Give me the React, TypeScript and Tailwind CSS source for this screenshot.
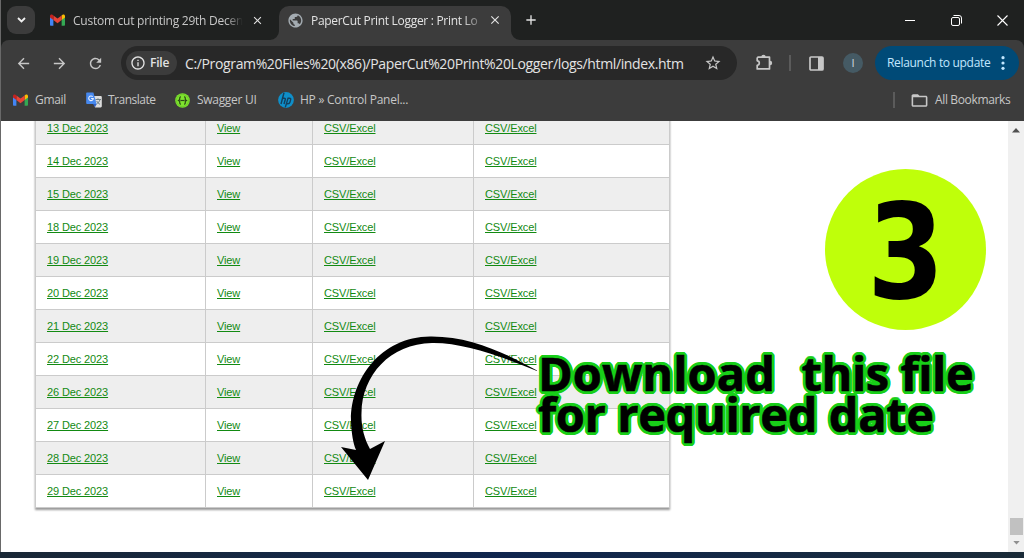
import type { ReactNode } from "react";
import { MdArrowBack, MdArrowForward, MdRefresh, MdInfoOutline, MdStarBorder, MdClose, MdAdd, MdFolderOpen, MdPublic } from "react-icons/md";

const dates = ["13", "14", "15", "18", "19", "20", "21", "22", "26", "27", "28", "29"];

function GmailIcon() {
  return (
    <svg className="h-[12px] w-[15px] shrink-0" viewBox="0 0 24 18">
      <path fill="#4285f4" d="M0 3v13.4C0 17.3.7 18 1.6 18H5.4V7z" />
      <path fill="#34a853" d="M18.6 18h3.8c.9 0 1.6-.7 1.6-1.6V3l-5.4 4z" />
      <path fill="#fbbc04" d="M18.6 1.6V9L24 4.9V2.5c0-2-2.3-3.1-3.9-1.9z" />
      <path fill="#ea4335" d="M5.4 9V1.6L12 6.6l6.6-5V9L12 14z" />
      <path fill="#c5221f" d="M0 2.5v2.4L5.4 9V1.6L3.9.6C2.3-.6 0 .5 0 2.5z" />
    </svg>
  );
}

function TranslateIcon() {
  return (
    <svg className="h-[16px] w-[16px] shrink-0" viewBox="0 0 16 16">
      <path fill="#dcdcdc" d="M6 4h8.7c.6 0 1.1.5 1.1 1.1v9.2c0 .6-.5 1.1-1.1 1.1H9z" />
      <path fill="none" stroke="#6d7f86" strokeWidth="1" d="M9.5 7.5H15M12 6.3v1.2M14 7.5c-.5 2-2 3.6-3.5 4.6M10.7 9c.6 1.4 2 2.6 3.3 3.3" />
      <path fill="#4688ee" d="M1.2.4h6.2L10.6 12H1.2C.6 12 .2 11.5.2 11V1.4C.2.8.6.4 1.2.4z" />
      <path fill="#2f5fc4" d="M7 12h3.6L9 15.3z" />
      <path fill="none" stroke="#e8f0ff" strokeWidth="1.1" d="M6.7 4.7A2.3 2.3 0 1 0 7.3 6.5H5.1" />
    </svg>
  );
}

function SwaggerIcon() {
  return (
    <svg className="h-[15px] w-[15px] shrink-0" viewBox="0 0 16 16">
      <circle cx="8" cy="8" r="7.8" fill="#7ee32e" />
      <circle cx="8" cy="8" r="6.5" fill="none" stroke="#5fbd22" strokeWidth=".6" />
      <path fill="none" stroke="#2c4a18" strokeWidth="1.3" d="M6.3 4.2C4.6 4 5.2 6 4.9 7.2L3.7 8l1.2.8C5.2 10 4.6 12 6.3 11.8M9.7 4.2c1.7-.2 1.1 1.8 1.4 3l1.2.8-1.2.8c-.3 1.2.3 3.2-1.4 3" />
      <path stroke="#2c4a18" strokeWidth="1.3" d="M5.8 8h4.4" />
    </svg>
  );
}

function HpIcon() {
  return (
    <svg className="h-[16px] w-[16px] shrink-0" viewBox="0 0 16 16">
      <circle cx="8" cy="8" r="7.9" fill="#0f8fc9" />
      <path fill="none" stroke="#143f5c" strokeWidth="1.4" d="M6 .8 3 12M4.6 6.2H6c1.4 0 1.5.6 1.2 1.6L6 12M10.2 5.6 7.3 15.4M10.1 6.2h1.3c1.3 0 1.5.7 1.2 1.7l-.7 2.3c-.3 1-.8 1.5-1.9 1.5H8.6" />
    </svg>
  );
}

function Bookmark({ icon, children, className }: { icon: ReactNode; children: ReactNode; className: string }) {
  return (
    <div className={className}>
      {icon}
      <span className="whitespace-nowrap">{children}</span>
    </div>
  );
}

function TabStrip() {
  return (
    <div className="flex h-10 shrink-0 bg-[#1f2120] text-[12px] text-[#e3e3e3]">
      <button className="ml-[6px] mt-[6px] flex h-7 w-7 items-center justify-center rounded-[9px] bg-[#3c3c3c]">
        <svg className="h-[6px] w-[9px]" viewBox="0 0 9 6" fill="none" stroke="#f0f0f0" strokeWidth="1.8">
          <path d="m1 1 3.5 3.5L8 1" />
        </svg>
      </button>
      <div className="ml-[15px] flex h-10 w-[222px] items-center">
        <GmailIcon />
        <span className="ml-2 w-[170px] overflow-hidden whitespace-nowrap pt-[1px] tracking-[-0.25px] text-[#c7c7c7] [mask-image:linear-gradient(to_right,black_90%,transparent_100%)]">Custom cut printing 29th Decen</span>
        <MdClose className="ml-[8px] h-[13px] w-[13px]" />
      </div>
      <div className="flex items-end">
        <svg className="-ml-[2px] h-[9px] w-[9px]" viewBox="0 0 9 9"><path fill="#3c3c3c" d="M9 0v9H0a9 9 0 0 0 9-9z" /></svg>
        <div className="flex h-[34px] w-[232px] items-center rounded-t-[10px] bg-[#3c3c3c] pb-[6px]">
          <MdPublic className="ml-[8px] h-[17px] w-[17px] text-[#a4acb2]" />
          <span className="ml-[7px] w-[168px] overflow-hidden whitespace-nowrap pt-[1px] tracking-[-0.3px] [mask-image:linear-gradient(to_right,black_90%,transparent_105%)]">PaperCut Print Logger : Print Lo</span>
          <MdClose className="ml-[9px] h-[14px] w-[14px]" />
        </div>
        <svg className="h-[9px] w-[9px]" viewBox="0 0 9 9"><path fill="#3c3c3c" d="M0 0v9h9a9 9 0 0 1-9-9z" /></svg>
      </div>
      <MdAdd className="ml-[3px] mt-[12px] h-4 w-4" />
      <div className="ml-auto mr-[16px] flex h-10 items-center text-white">
        <svg className="h-3 w-[10px]" viewBox="0 0 10 12"><path d="M0 6.5h10" stroke="white" /></svg>
        <svg className="ml-[36px] h-[11px] w-[11px]" viewBox="0 0 11 11" fill="none" stroke="white">
          <rect x=".5" y="2.5" width="8" height="8" rx="1.5" />
          <path d="M2.5.5H8a2.5 2.5 0 0 1 2.5 2.5v5.5" />
        </svg>
        <svg className="ml-[35px] h-[11px] w-[11px]" viewBox="0 0 11 11" stroke="white" strokeWidth="1.1"><path d="m.5.5 10 10m0-10-10 10" /></svg>
      </div>
    </div>
  );
}

function Toolbar() {
  return (
    <div className="h-[46px] shrink-0 bg-[#1f2120]">
      <div className="flex h-full items-center rounded-t-[8px] bg-[#3c3c3c] text-[#c7c7c7]">
        <MdArrowBack className="ml-[14px] h-[17px] w-[17px]" />
        <MdArrowForward className="ml-[19px] h-[17px] w-[17px]" />
        <MdRefresh className="ml-[19px] h-[17px] w-[17px]" />
        <div className="ml-[17px] flex h-[34px] w-[616px] items-center rounded-full bg-[#282828]">
          <div className="ml-[5px] flex h-6 w-[51px] shrink-0 items-center rounded-full bg-[#3c3c3c] text-[12px] font-semibold text-[#e3e3e3]">
            <MdInfoOutline className="ml-[4px] h-4 w-4" />
            <span className="ml-[4px] tracking-[-0.2px]">File</span>
          </div>
          <span className="ml-[8px] w-[510px] shrink-0 whitespace-nowrap text-[14px] tracking-[-0.36px] text-[#e3e3e3]">C:/Program%20Files%20(x86)/PaperCut%20Print%20Logger/logs/html/index.htm</span>
          <MdStarBorder className="ml-[9px] h-[18px] w-[18px] shrink-0" />
        </div>
        <svg className="ml-[18px] h-[18px] w-[18px] shrink-0" viewBox="0 0 18 18">
          <path fill="none" stroke="#c7c7c7" strokeWidth="1.7" strokeLinejoin="round" d="M3 3.2h11.5v11.7H2.2v-3.6c2.8-.2 2.8-4.4 0-4.5V4z" />
          <path fill="#c7c7c7" d="M6.3 3a2.2 2.2 0 0 1 4.4 0zM15 6.8a2.2 2.2 0 0 1 0 4.4z" />
        </svg>
        <div className="ml-[16px] h-4 w-[2px] shrink-0 bg-[#5b5b5b]" />
        <svg className="ml-[18px] h-[15px] w-[15px] shrink-0" viewBox="0 0 15 15">
          <rect x="1" y="1" width="13" height="13" rx="1" fill="none" stroke="#c7c7c7" strokeWidth="1.7" />
          <path fill="#c7c7c7" d="M9 1h5v13H9z" />
        </svg>
        <div className="ml-[19px] flex h-5 w-5 shrink-0 items-center justify-center rounded-full bg-[#455a64] text-[11px] text-[#d2dce0]">I</div>
        <div className="ml-[12px] flex h-[34px] w-[144px] shrink-0 items-center rounded-full bg-[#004a77] text-[12px] text-[#c2e7ff]">
          <span className="ml-[12px] w-[107px] whitespace-nowrap tracking-[-0.32px]">Relaunch to update</span>
          <svg className="ml-[7px] h-4 w-1" viewBox="0 0 4 16" fill="#c2e7ff"><circle cx="2" cy="2.7" r="1.6" /><circle cx="2" cy="8" r="1.6" /><circle cx="2" cy="13.3" r="1.6" /></svg>
        </div>
      </div>
    </div>
  );
}

function Bookmarks() {
  return (
    <div className="flex h-[35px] shrink-0 items-center bg-[#3c3c3c] pb-[7px] text-[12px] text-[#c7c7c7]">
      <Bookmark className="ml-[12px] flex w-[73px] items-center gap-[7px] tracking-[-0.3px]" icon={<GmailIcon />}>Gmail</Bookmark>
      <Bookmark className="flex w-[89px] items-center gap-[6px] tracking-[-0.5px]" icon={<TranslateIcon />}>Translate</Bookmark>
      <Bookmark className="flex w-[103px] items-center gap-[7px] tracking-[-0.3px]" icon={<SwaggerIcon />}>Swagger UI</Bookmark>
      <Bookmark className="flex items-center gap-[6px] tracking-[-0.25px]" icon={<HpIcon />}>HP » Control Panel...</Bookmark>
      <div className="ml-auto mr-[13px] flex items-center">
        <div className="h-4 w-[2px] bg-[#5b5b5b]" />
        <MdFolderOpen className="ml-[15px] h-[19px] w-[19px]" />
        <span className="ml-[6px] w-[76px] whitespace-nowrap tracking-[-0.36px]">All Bookmarks</span>
      </div>
    </div>
  );
}

function Cell({ children }: { children: ReactNode }) {
  return (
    <div className="flex items-center border-b border-r border-[#cbcbcb] pl-[11px]">
      <a className="underline" href="#">{children}</a>
    </div>
  );
}

function LogTable() {
  return (
    <div className="-mt-[9px] ml-[34px] h-[396px] w-[635px] border-l border-[#cbcbcb] font-['Liberation_Sans',sans-serif] text-[11px] tracking-[-0.12px] text-[#128a12] shadow-[0_2px_2px_#999]">
      {dates.map((d) => (
        <div key={d} className="grid h-[33px] grid-cols-[170px_107px_161px_196px] bg-white odd:bg-[#eeeeee]">
          <Cell>{d} Dec 2023</Cell>
          <Cell>View</Cell>
          <Cell>CSV/Excel</Cell>
          <Cell>CSV/Excel</Cell>
        </div>
      ))}
    </div>
  );
}

export default function App() {
  return (
    <div className="relative flex h-[558px] w-[1024px] flex-col overflow-hidden bg-white font-['Open_Sans','Noto_Sans',sans-serif]">
      <div className="flex h-[552px] shrink-0 flex-col border-l border-[#696969]">
        <TabStrip />
        <Toolbar />
        <Bookmarks />
        <div className="flex min-h-0 flex-1 overflow-hidden">
          <div className="min-w-0 flex-1">
            <LogTable />
          </div>
          <div className="flex w-4 flex-col items-center bg-[#f0f0f0]">
            <svg className="mt-[7px] h-[5px] w-2" viewBox="0 0 8 5"><path fill="#505050" d="M4 0 8 4.5H0z" /></svg>
            <div className="mt-auto h-[17px] w-[13px] bg-[#c1c1c1]" />
            <svg className="mb-[7px] mt-[6px] h-[4px] w-[7px]" viewBox="0 0 8 5"><path fill="#909090" d="M0 0h8L4 4.5z" /></svg>
          </div>
        </div>
      </div>
      <div className="h-[6px] shrink-0 bg-linear-to-r from-[#1a2836] via-[#10264f] to-[#1a2b38]" />

      <div className="absolute left-[825px] top-[169px] flex h-[161px] w-[161px] items-center justify-center rounded-full bg-[#bfff0a] pt-[5px]">
        <span className="scale-x-[0.84] font-['DejaVu_Sans'] text-[132px] font-bold leading-none text-black">3</span>
      </div>
      <svg className="absolute left-[330px] top-[330px] h-[155px] w-[215px]" viewBox="330 330 215 155">
        <path d="M537 370.5C505 353 470 336 430 336.5C380 337 350 380 351 422C351.5 433 353 443 356 450L341 447L368 480L385 441L370 449C364 438 361 426 361.5 413C362 375 390 344 432 343C463 342.5 500 356 537 371z" />
      </svg>
      <div className="absolute left-[538px] top-[353px] whitespace-pre text-[47px] font-bold leading-[41px] text-black [-webkit-text-stroke:0.6px_black] [text-shadow:3px_0_#18cf18,2.8px_1.1px_#18cf18,2.1px_2.1px_#18cf18,1.1px_2.8px_#18cf18,0_3px_#18cf18,-1.1px_2.8px_#18cf18,-2.1px_2.1px_#18cf18,-2.8px_1.1px_#18cf18,-3px_0_#18cf18,-2.8px_-1.1px_#18cf18,-2.1px_-2.1px_#18cf18,-1.1px_-2.8px_#18cf18,0_-3px_#18cf18,1.1px_-2.8px_#18cf18,2.1px_-2.1px_#18cf18,2.8px_-1.1px_#18cf18]">
        <div className="tracking-[0.05px]">Download  <span className="ml-[2px] tracking-[-0.45px]">this file</span></div>
        <div className="tracking-[-0.4px]">for required date</div>
      </div>
    </div>
  );
}
